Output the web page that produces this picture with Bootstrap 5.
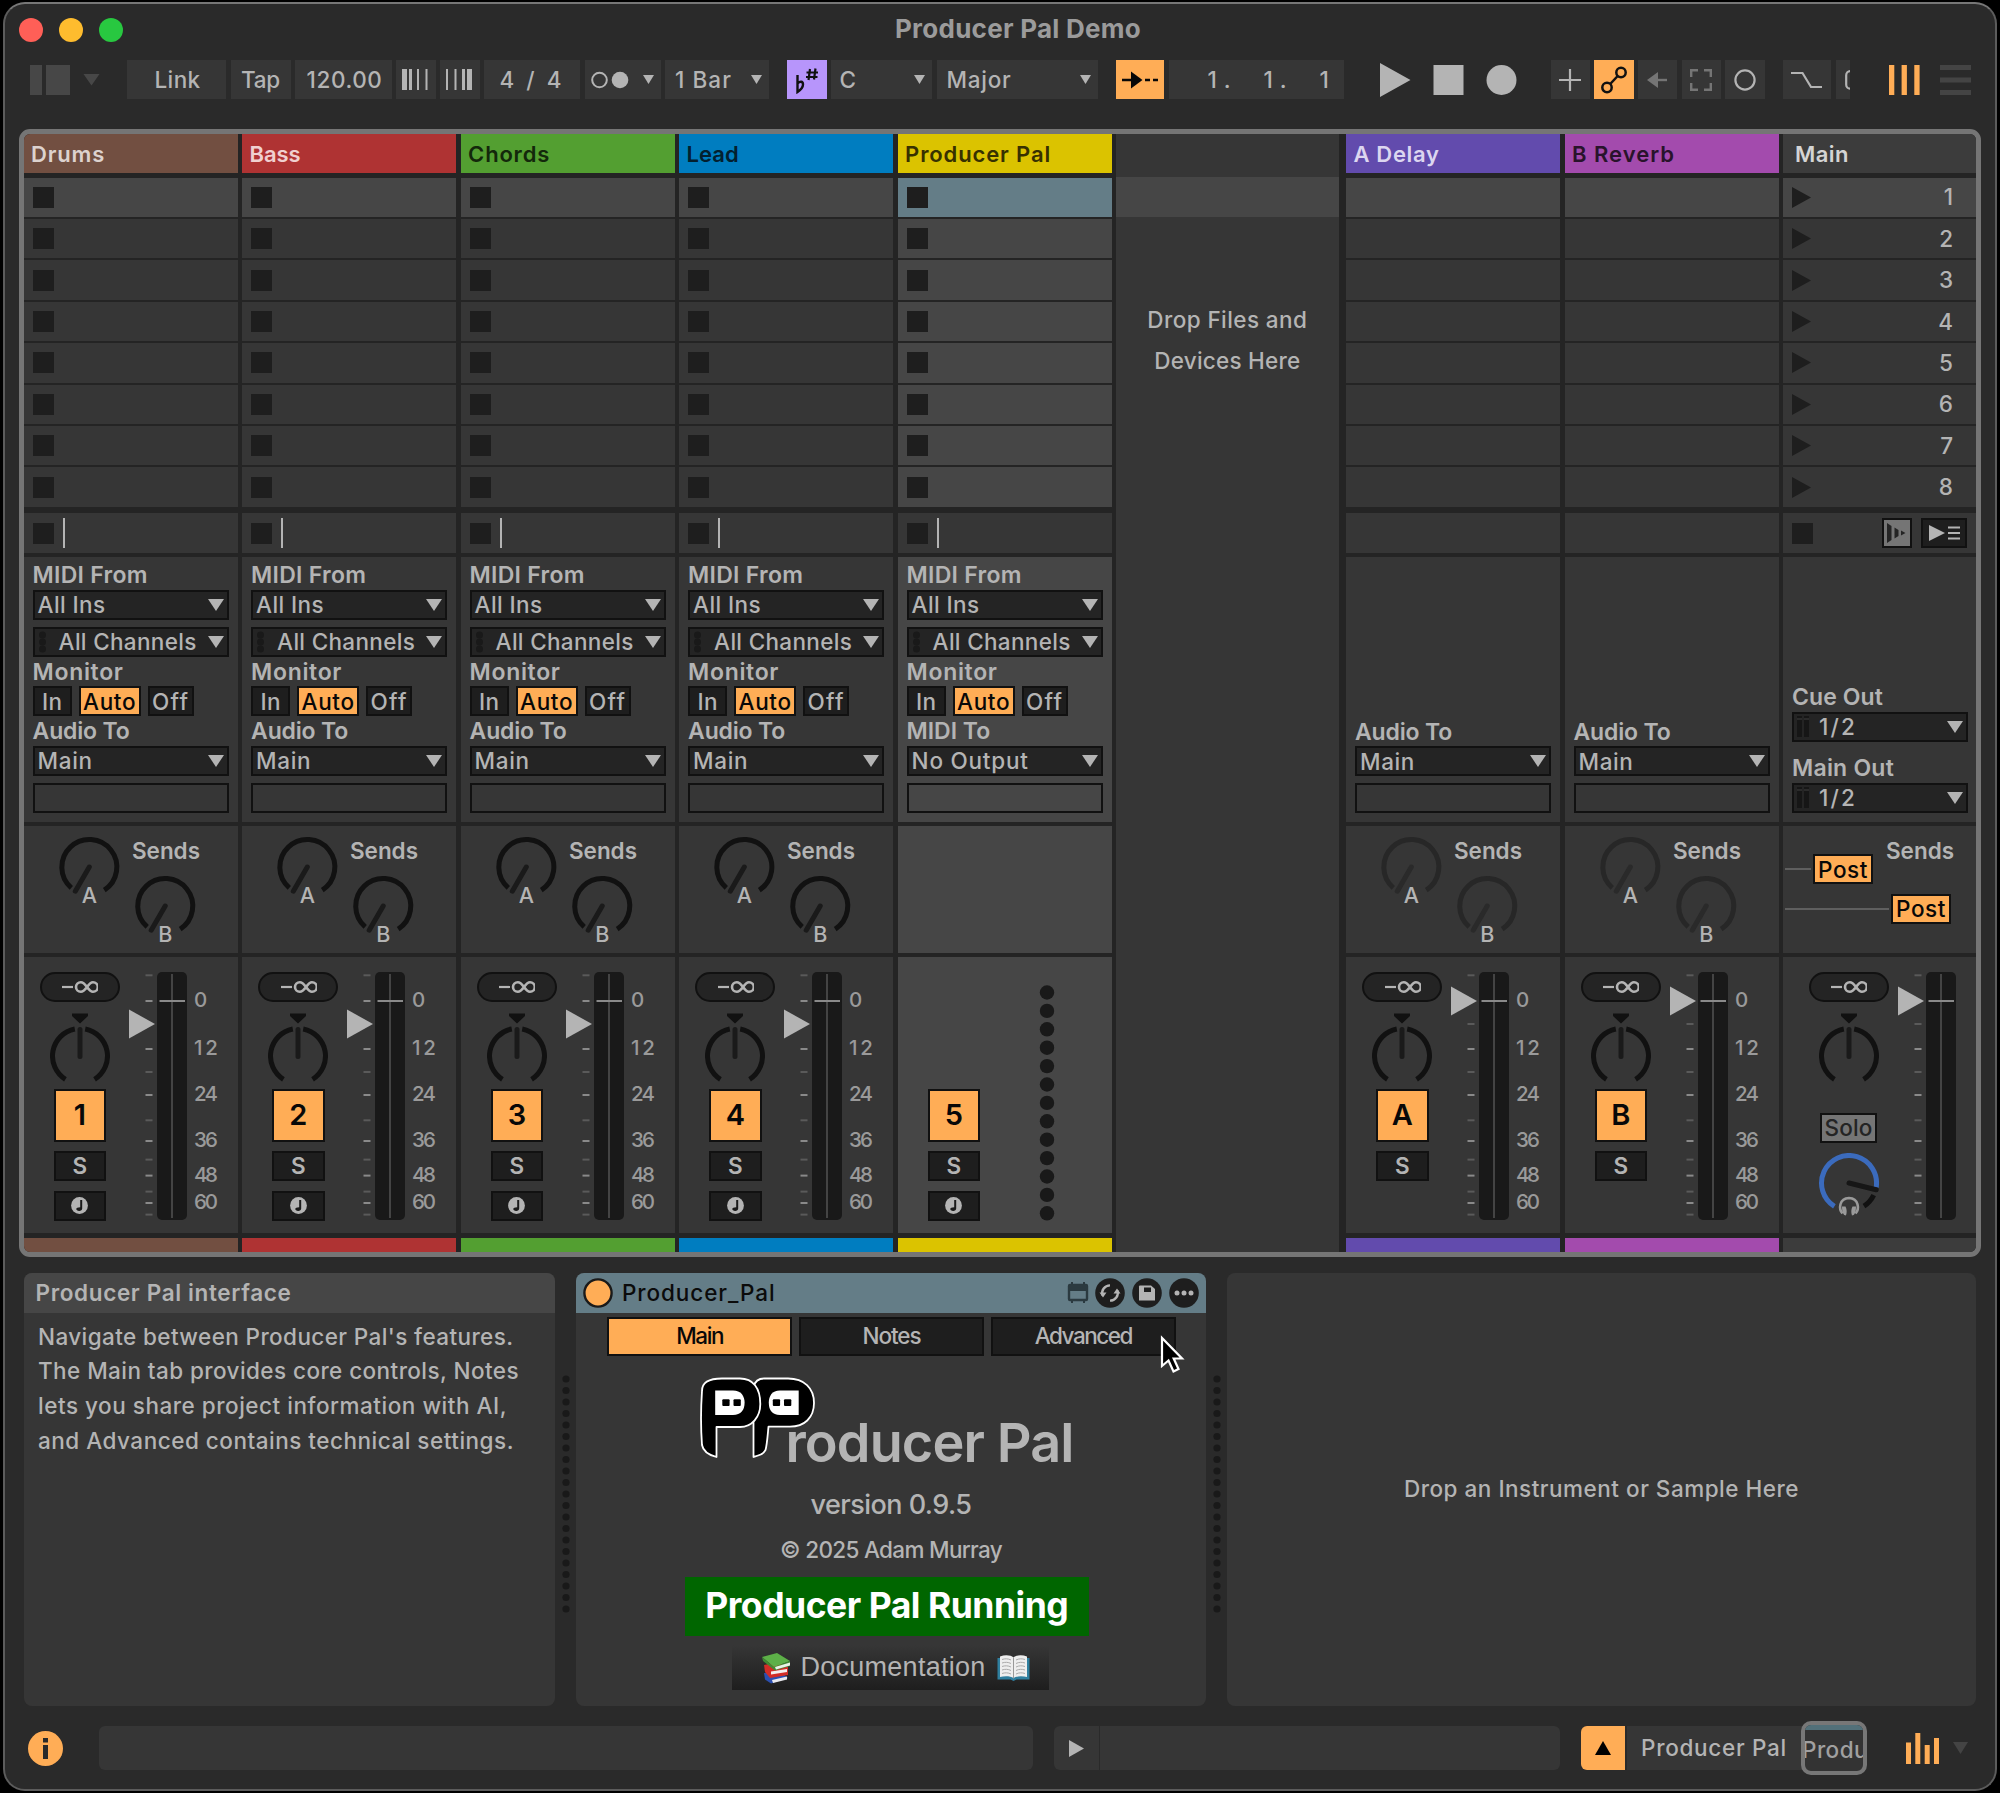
<!DOCTYPE html>
<html lang="en">
<head>
<meta charset="utf-8">
<title>Producer Pal Demo</title>
<link href="https://cdn.jsdelivr.net/npm/bootstrap@5.3.0/dist/css/bootstrap.min.css" rel="stylesheet">
<style>
html,body{background:#000;margin:0;overflow:hidden}
body{font-family:Inter,"Liberation Sans",sans-serif;font-size:22.5px;font-weight:480;color:#b4b4b4;line-height:1;height:1793px}
svg{display:block;flex:none}
svg text{font-family:Inter,"Liberation Sans",sans-serif}
[data-w]{display:inline-block;white-space:pre;flex:none}
.win{margin:2px 0 0 3px;width:1994px;height:1789px;background:#2a2a2a;border:2px solid #5c5c5c;border-top-color:#777;border-radius:22px}
.titlebar{height:56px;padding-bottom:4px}
.titlebar .ttl{font-size:26px;font-weight:700;color:#9b9b9b;margin-left:-98px;position:relative;top:-1px}
.lamp{width:24px;height:24px;border-radius:50%;margin-right:16px}
.tools{height:39px;padding-left:25px}
.tl{height:39px;background:#363636;flex:none;display:flex;align-items:center;justify-content:center;overflow:hidden}
.tl [data-w]{padding-top:1.5px}
.tl.pick{justify-content:space-between}
.tl.hot{background:#ffad56}
.tl.scale-on{background:#b795fb}
.frame{margin:30px 0 0 14px;width:1962px;height:1128px;border:5px solid #757575;border-radius:11px;background:#242424;overflow:hidden}
.trk{width:214px;flex:none;margin-right:4.5px}
.trk:first-child{margin-left:-.4px}
.trk.mainout{width:194px;margin-right:0}
.cellbox{background:#363636;flex:none}
.sel .cellbox{background:#464646}
.hd{height:39px;padding:0 0 0 7.5px;margin-bottom:4.5px;font-weight:600;font-size:22px;display:flex;align-items:center}
.slots{height:329.2px;margin-bottom:6.8px;display:flex;flex-direction:column;gap:2px}
.slot{flex:1 1 0;padding:0 24px 0 9px;display:flex;align-items:center;justify-content:space-between;background:#363636}
.slot span{padding-top:1px}
.sel .slot{background:#464646}
.slot:first-child{background:#464646}
.sel .slot:first-child{background:#647d87}
.sq{width:21px;height:21px;background:#1e1e1e;flex:none}
.stoprow{height:39.5px;margin-bottom:4.5px;padding:0 9px;display:flex;align-items:center}
.sel .stoprow{background:#363636}
.cline{width:2px;height:30px;background:#b4b4b4;margin-left:9px}
.io{height:264.5px;margin-bottom:4.5px;padding:2.7px 9px 9px 9px}
.lb{height:29.8px;line-height:31px;font-weight:600;font-size:23px}
.dd{height:29.8px;background:#242424;border:2px solid #111;padding:0 3px;display:flex;align-items:center;justify-content:space-between}
.dd [data-w],.mb [data-w]{padding-top:1px}
.dd.void{background:transparent;margin-top:7px}
.mb{height:29.8px;background:#1e1e1e;border:2px solid #111;display:flex;align-items:center;justify-content:center}
.mb.hot{background:#ffad56;color:#080808}
.snd{height:127px;margin-bottom:4px}
.mix{height:276px;margin-bottom:4.5px;padding:14.8px 0 0 16.3px;display:flex}
.strip{height:14px}
.pill{width:80px;height:30px;border:2px solid #111;border-radius:15px;background:#242424;display:flex;align-items:center;justify-content:center;font-size:26px}
.num{width:52.5px;height:53px;border:2px solid #111;background:#ffad56;color:#080808;font-weight:600;font-size:29px;display:flex;align-items:center;justify-content:center;margin-bottom:9px;padding-bottom:2px}
.sb{width:52.5px;height:30px;border:2px solid #111;background:#1e1e1e;display:flex;align-items:center;justify-content:center;margin-bottom:9.5px;font-weight:600}
.solo{width:57px;height:30px;border:2px solid #111;background:#757575;color:#242424;display:flex;align-items:center;justify-content:center;margin:23.500px 0 10px}
.drop{width:222.5px;margin-right:7.4px;flex:none;background:linear-gradient(#363636 43px,#464646 43px,#464646 83px,#363636 83px);padding-top:165px;text-align:center;line-height:41.4px}
.lower{margin:16px 0 0 19px;height:432.5px}
.pane{background:#363636;border-radius:8px;overflow:hidden;flex:none}
.phead{height:39.5px;display:flex;align-items:center}
.help{line-height:34.7px;padding:7px 0 0 14px}
.dots{width:21px;flex:none;display:flex;justify-content:center;align-items:center;padding-top:10px}
.tabx{width:184.5px;height:39.3px;border:2px solid #111;background:#1e1e1e;display:flex;align-items:center;justify-content:center}
.tabx [data-w]{padding-top:1px}
.tabx.hot{background:#ffad56;color:#080808}
.run{width:404.5px;height:59.5px;background:#060;color:#fff;font-weight:700;font-size:35.5px;margin:11.7px 8.5px 0 0;padding-bottom:1px}
.docs{width:317px;height:45.5px;margin:8.3px 1px 0 0;background:linear-gradient(#363636,#1e1e1e);font:27px "Liberation Sans",sans-serif}
.foot{height:44px;margin:20.5px 0 0 0;padding-left:23px}
.bar{height:44px;background:#363636;flex:none;display:flex;align-items:center}
.thumb{width:66px;height:54px;border:4.5px solid #777;border-radius:10px;background:#333;overflow:hidden;flex:none;margin-left:-2px}
.thumb i{display:block;height:5px;background:#527079}
.pointer{position:absolute;left:1160px;top:1335px}
</style>
</head>
<body>
<div class="win">
  <div class="titlebar d-flex align-items-center ps-3">
    <div class="lamp" style="background:#ff5f57;margin-left:-2px"></div><div class="lamp" style="background:#febc2e"></div><div class="lamp" style="background:#28c840"></div>
    <div class="flex-fill text-center"><span class="ttl" data-w="246">Producer Pal Demo</span></div>
  </div>
  <div class="tools d-flex align-items-center" id="tools"></div>
  <div class="frame d-flex" id="frame"></div>
  <div class="lower d-flex">
    <section class="pane" style="width:531px">
      <div class="phead" style="background:#464646;padding-left:11.500px;font-weight:600"><span data-w="256">Producer Pal interface</span></div>
      <div class="help">
        <div><span data-w="475.500">Navigate between Producer Pal's features.</span></div>
        <div><span data-w="481">The Main tab provides core controls, Notes</span></div>
        <div><span data-w="469">lets you share project information with AI,</span></div>
        <div><span data-w="476">and Advanced contains technical settings.</span></div>
      </div>
    </section>
    <div class="dots"></div>
    <section class="pane" style="width:630px">
      <div class="phead" style="background:#647d87;padding-left:7px;color:#0b0b0b;font-weight:530">
        <svg width="30" height="30"><circle cx="15" cy="15" r="13.600" fill="#ffad56" stroke="#1a1a1a" stroke-width="2.400"/></svg>
        <span style="width:442px;margin-left:9px"><span data-w="153.500">Producer_Pal</span></span>
        <svg width="22" height="28" viewBox="0 0 22 28" style="margin-left:3px"><path d="M5 3v4M17 3v4M5 21v3M17 21v3" stroke="#2b3a40" stroke-width="2"/><rect x="2" y="6" width="18" height="15" rx="1" fill="none" stroke="#2b3a40" stroke-width="2.400"/><rect x="2" y="6" width="18" height="6" fill="#2b3a40"/></svg>
        <svg width="30" height="30" viewBox="0 0 30 30" style="margin-left:6px"><circle cx="15" cy="15" r="14.800" fill="#1e1e1e"/><path d="M7.500 17.500A7.800 7.800 0 0 1 15 7.400M22.500 12.500A7.800 7.800 0 0 1 15 22.600" fill="none" stroke="#b4b4b4" stroke-width="2.400"/><path d="M4.500 14.500h7l-3.500 5zM18.500 15.500h7l-3.500-5z" fill="#b4b4b4"/></svg>
        <svg width="30" height="30" viewBox="0 0 30 30" style="margin-left:7px"><circle cx="15" cy="15" r="14.800" fill="#1e1e1e"/><path d="M8 7.500h11l4 3.500v11.500h-16v-14a1 1 0 0 1 1-1z" fill="#b4b4b4"/><rect x="12" y="9.500" width="7" height="4.500" fill="#1e1e1e"/></svg>
        <svg width="30" height="30" viewBox="0 0 30 30" style="margin-left:7px"><circle cx="15" cy="15" r="14.800" fill="#1e1e1e"/><g fill="#b4b4b4"><circle cx="8" cy="15" r="2.500"/><circle cx="15" cy="15" r="2.500"/><circle cx="22" cy="15" r="2.500"/></g></svg>
      </div>
      <div class="d-flex flex-column align-items-center">
        <div class="d-flex" style="gap:7.300px;margin:4px 0 0 1px">
          <div class="tabx hot"><span data-w="47">Main</span></div><div class="tabx"><span data-w="58">Notes</span></div><div class="tabx"><span data-w="97">Advanced</span></div>
        </div>
        <div class="d-flex" style="margin:21.500px 9px 0 0;height:92px">
          <svg width="116" height="82" viewBox="0 0 116 82">
            <g fill="#000" stroke="#fff" stroke-width="1.800" stroke-linejoin="round">
              <path d="M53.500 80V10C55 4 58 1.500 64 1.500H88C104 1.500 114 11 114 26C114 41 104 49.700 90 49.700H68.500C67.500 60 67 68 65.500 73C63 77.500 59 78.500 53.500 80Z"/>
              <path d="M16.500 80V50H40C52 50 60.300 40 60.300 27C60.300 11 53 1.500 40 1.500H22C8 1.500 2 6 2 14C.9 30 .8 52 2 68C3 74 9 78 16.500 80Z"/>
            </g>
            <g fill="#fff"><path d="M15.200 13.500H33C41 13.500 44.600 19 44.600 25.800C44.600 33 41 38 33 38H15.200Z"/><path d="M98.700 13.500H80C72 13.500 68.800 19 68.800 25.800C68.800 33 72 38 80 38H98.700Z"/></g>
            <g fill="#000"><rect x="22.300" y="22.200" width="7.300" height="6.800" rx="1"/><rect x="33.500" y="22.200" width="7.300" height="6.800" rx="1"/><rect x="72.800" y="22.200" width="7.300" height="6.800" rx="1"/><rect x="84" y="22.200" width="7.300" height="6.800" rx="1"/></g>
          </svg>
          <span data-w="288" style="font-size:54px;font-weight:600;margin:39px 0 0 -30px;line-height:54px">roducer Pal</span>
        </div>
        <div style="margin-top:21px;line-height:30px;font-size:27px"><span data-w="161">version 0.9.5</span></div>
        <div style="margin-top:15px;line-height:30px"><span data-w="222">© 2025 Adam Murray</span></div>
        <div class="run d-flex align-items-center justify-content-center"><span data-w="363">Producer Pal Running</span></div>
        <div class="docs d-flex align-items-center justify-content-center">
          <svg width="32" height="32" viewBox="0 0 32 32"><path d="M4 21l17-1 7 6-17 5.500-6-4z" fill="#2b4fb0"/><path d="M12 28l15-3.500v3l-14 3.500z" fill="#e8e8ee"/><path d="M4 13l14-3 10 5v8L10 26l-5-6z" fill="#d22c26"/><path d="M11 19.500l16-2.500v3l-16 2.500z" fill="#f3eeee"/><path d="M2 5l15-4 13 8-16 6z" fill="#5db048"/><path d="M2 5l12 10 16-6v5l-15 4.500L3 9z" fill="#3f8b33"/><path d="M15 15l15-4.500v3l-14 4z" fill="#e9f2e6"/></svg>
          <span data-w="185" style="margin:0 11px 0 9px">Documentation</span>
          <svg width="33" height="28" viewBox="0 0 33 28" style="margin-right:-8px"><path d="M.5 4h32v21.500h-13l-3 1.500-3-1.500h-13z" fill="#2f7f9f"/><path d="M3 2.500c5-2 11-1.500 13.500 1v20.500c-3-2-9-2-13.500-1zM30 2.500c-5-2-11-1.500-13.500 1v20.500c3-2 9-2 13.500-1z" fill="#eee"/><path d="M5 5.500c3-1 6-1 9 .5M5 9c3-1 6-1 9 .5M5 12.500c3-1 6-1 9 .5M5 16c3-1 6-1 9 .5M5 19.500c3-1 6-1 9 .5M28 5.500c-3-1-6-1-9 .5M28 9c-3-1-6-1-9 .5M28 12.500c-3-1-6-1-9 .5M28 16c-3-1-6-1-9 .5M28 19.500c-3-1-6-1-9 .5" stroke="#aaa" fill="none"/><path d="M16.500 3.500v21" stroke="#999"/></svg>
        </div>
      </div>
    </section>
    <div class="dots"></div>
    <section class="pane d-flex align-items-center justify-content-center" style="width:749px"><span data-w="395">Drop an Instrument or Sample Here</span></section>
  </div>
  <footer class="foot d-flex align-items-center">
    <svg width="35" height="35" viewBox="0 0 35 35"><circle cx="17.500" cy="17.500" r="17.500" fill="#ffad56"/><path d="M15 7h5v4.500h-5zM15 14h5v14h-5z" fill="#2a2a2a"/></svg>
    <div class="bar" style="width:934px;margin-left:36px;border-radius:6px"></div>
    <div class="bar justify-content-center" style="width:44.500px;margin-left:21px;border-radius:6px 0 0 6px"><svg width="15" height="17"><path d="M0 0L15 8.500 0 17z" fill="#b4b4b4"/></svg></div>
    <div class="bar" style="width:460px;margin-left:1.500px;border-radius:0 6px 6px 0"></div>
    <div class="bar justify-content-center" style="width:44px;margin-left:21px;border-radius:6px 0 0 6px;background:#ffad56"><svg width="16" height="14"><path d="M8 0L16 14H0z" fill="#000"/></svg></div>
    <div class="bar" style="width:176px;margin-left:2px;padding-left:14px;font-weight:530"><span data-w="146">Producer Pal</span></div>
    <div class="thumb"><i></i><div style="padding-top:9px;margin-left:-3px;color:#a0a0a0"><span data-w="66">Produ</span></div></div>
    <svg width="34" height="31" viewBox="0 0 34 31" style="margin-left:39px" fill="#ffad56"><path d="M0 9.500h5V31H0zM9.300 0h5v31h-5zM18.700 12h5v19h-5zM28 5h5v26h-5z"/></svg>
    <svg width="15" height="12" style="margin-left:13px"><path d="M0 0H15L7.500 12z" fill="#444"/></svg>
  </footer>
</div>
<svg class="pointer" width="30" height="42" viewBox="0 0 30 42"><path d="M2 3V31L8.500 25.500 13.500 36.500 18.500 34 13.700 23.500H22z" fill="#000" stroke="#fff" stroke-width="2.200"/></svg>

<script src="https://cdn.jsdelivr.net/npm/bootstrap@5.3.0/dist/js/bootstrap.bundle.min.js"></script>
<script>
const G = '#b4b4b4';
const t = (w, s) => `<span data-w="${w}">${s}</span>`;
const caret = (w = 11, h = 9, c = G) => `<svg width="${w}" height="${h}"><path d="M0 0H${w}L${w / 2} ${h}z" fill="${c}"/></svg>`;
// Toolbar entry: left margin, width, content, modifier class, padding
const tool = (ml, w, html, cls = '', pad = '') => `<div class="tl ${cls}" style="margin-left:${ml}px;width:${w}px;${pad ? 'padding:0 ' + pad : ''}">${html}</div>`;
const bars = a => `<svg width="27" height="21">${a.map(([x, w]) => `<rect x="${x}" width="${w}" height="21" fill="${G}"/>`).join('')}</svg>`;
document.getElementById('tools').innerHTML =
  `<svg width="70" height="30" viewBox="0 0 70 30"><path d="M0 0h12v30H0zM16 0h24v30H16zM53.500 9h16l-8 11.500z" fill="#474747"/></svg>` +
  tool(27, 99, t(46, 'Link'), '', '0 0 2px') + tool(4.5, 60, t(39, 'Tap')) + tool(4.5, 97, t(76, '120.00'), '', '0 0 2px') +
  tool(4, 39.5, bars([[0, 5], [7, 3], [15, 2], [23.5, 2]])) + tool(4.5, 39.5, bars([[0, 2], [8.5, 2], [16, 3], [21, 5]])) +
  tool(4.5, 96, t(65, '4 / 4')) +
  tool(5, 76, `<svg width="38" height="18"><circle cx="8.500" cy="9" r="7.300" fill="none" stroke="${G}" stroke-width="2"/><circle cx="29" cy="9" r="8.300" fill="${G}"/></svg>` + caret(), 'pick', '7px 0 6px') +
  tool(4, 104, t(57, '1 Bar') + caret(), 'pick', '7px 0 10px') +
  tool(18, 39.5, `<svg width="24" height="28" viewBox="0 0 24 28" fill="none" stroke="#111" stroke-width="2.400"><path d="M2.500 9v17c3-2 5.500-4.500 5.500-7.500 0-3.500-3-3.500-5.500-1"/><path d="M15 3l-1.500 11M20.500 2.500l-1.500 11M11.500 6.500h11.500M11 11h11.500" stroke-width="2.200"/></svg>`, 'scale-on') +
  tool(4, 101, t(16, 'C') + caret(), 'pick', '7px 0 9px') + tool(5, 161, t(65, 'Major') + caret(), 'pick', '7px 0 10px') +
  tool(18, 48.5, `<svg width="36" height="22" viewBox="0 0 36 22"><path d="M0 11h10M23 11h5M31 11h5" stroke="#080808" stroke-width="2.600"/><path d="M9 2.500L20.500 11 9 19.500z" fill="#080808"/></svg>`, 'hot') +
  tool(4.5, 175, t(30, '1.') + t(30, '1.') + t(13, '1'), 'pick', '11px 0 39px') +
  `<svg width="137" height="34" viewBox="0 0 137 34" style="margin-left:36px" fill="${G}"><path d="M0 0L30.500 17 0 34zM53.500 2h30v30h-30z"/><circle cx="121.500" cy="17" r="15"/></svg>` +
  tool(34, 39, `<svg width="22" height="22"><path d="M11 0v22M0 11h22" stroke="${G}" stroke-width="2.200"/></svg>`) +
  tool(4.5, 39.5, `<svg width="26" height="32" viewBox="0 0 26 32" fill="none" stroke="#111" stroke-width="2.500"><circle cx="6" cy="23.500" r="4.700"/><circle cx="20" cy="8.500" r="4.700"/><path d="M9.200 20L16.700 12"/></svg>`, 'hot') +
  tool(4, 39.5, `<svg width="20" height="18"><path d="M0 9L11 1v16z" fill="#757575"/><path d="M10 9h10" stroke="#757575" stroke-width="2.400"/></svg>`) +
  tool(4.5, 39.5, `<svg width="22" height="22" fill="none" stroke="#757575" stroke-width="2.400"><path d="M1.200 8V1.200H8M14 1.200h6.800V8M20.800 14v6.800H14M8 20.800H1.200V14"/></svg>`) +
  tool(4, 39.5, `<svg width="22" height="22"><circle cx="11" cy="11" r="9.600" fill="none" stroke="${G}" stroke-width="2.200"/></svg>`) +
  tool(18, 48.5, `<svg width="31" height="18"><path d="M0 2h11.500L20 16h11" fill="none" stroke="${G}" stroke-width="2.200"/></svg>`) +
  `<div class="tl justify-content-start" style="margin-left:5px;width:14px;padding-left:9px"><svg width="20" height="20"><rect x="1.200" y="1.200" width="17" height="17.500" rx="4" fill="none" stroke="${G}" stroke-width="2.200"/></svg></div>` +
  `<svg width="83" height="30" style="margin-left:38.500px"><path d="M0 0h5.300v30H0zM12.600 0h5.300v30h-5.300zM25.300 0h5.300v30h-5.300z" fill="#ffad56"/><path d="M51 0h31v5H51zM51 12.500h31v5H51zM51 25h31v5H51z" fill="#444"/></svg>`;

const deg = Math.PI / 180;
const pt = (cx, cy, r, a) => `${(cx + r * Math.sin(a * deg)).toFixed(1)} ${(cy - r * Math.cos(a * deg)).toFixed(1)}`;
// Arc between two clock angles, 0 at the top
const arc = (cx, cy, a, b, c, r = 27.5) => `<path d="M${pt(cx, cy, r, a)}A${r} ${r} 0 ${b - a > 180 ? 1 : 0} 1 ${pt(cx, cy, r, b)}" fill="none" stroke="${c}" stroke-width="5"/>`;
const needle = (cx, cy, a, c) => `<path d="M${cx} ${cy}L${pt(cx, cy, 28, a)}" stroke="${c}" stroke-width="5" stroke-linecap="round"/>`;
const sendKnob = (cx, cy, s, dim) => arc(cx, cy, -139, 147, dim ? '#272727' : '#111') + needle(cx, cy, -150, dim ? '#2a2a2a' : '#1a1a1a') +
  `<text x="${cx}" y="${cy + 35.7}" text-anchor="middle" font-size="21.500" font-weight="500" fill="${G}">${s}</text>`;
const sends = dim => `<svg width="214" height="127">${sendKnob(65.3, 41, 'A', dim)}${sendKnob(141.2, 80, 'B', dim)}<text x="108" y="33" textLength="68" font-size="22.500" font-weight="600" fill="${G}">Sends</text></svg>`;

const fader = (pos, labels) => {
  const ys = [[3.3, 0], [29, 1], [52, 0], [77, 1], [100, 0], [123, 1], [148.3, 0], [169, 1], [187.6, 0], [203.6, 1], [219.6, 0], [231, 1], [242.6, 0]];
  const lab = [['0', 27.7], ['12', 75.7], ['24', 121.7], ['36', 167.7], ['48', 202.2], ['60', 229.7]];
  return `<svg width="${labels ? 92 : 60}" height="250" style="margin-left:9px">` +
    ys.map(([y, b]) => `<path d="M16.500 ${y}h7" stroke="${b ? '#8a8a8a' : '#5a5a5a'}" stroke-width="2"/>`).join('') +
    `<path d="M0 ${pos - 14.5}L26 ${pos} 0 ${pos + 14.5}z" fill="${G}"/><rect x="28" width="30" height="248" rx="5" fill="#191919"/>` +
    `<path d="M43 2v244" stroke="#444" stroke-width="2"/><path d="M30.500 29h25.500" stroke="#8a8a8a" stroke-width="2"/>` +
    (labels ? lab.map(([s, y]) => `<text x="65" y="${y + 7.5}" ${s.length > 1 ? 'textLength="24"' : ''} font-size="20.500" fill="#9a9a9a">${s}</text>`).join('') : '') + `</svg>`;
};
const pan = `<svg width="60" height="76" style="margin:11px 0 0"><path d="M22 .5h16v2.500l-8 7.500-8-7.500z" fill="#111"/>${arc(30, 43, -148, -11, '#111')}${arc(30, 43, 11, 148, '#111')}<path d="M30 16.500v27" stroke="#1a1a1a" stroke-width="5" stroke-linecap="round"/></svg>`;
const note = `<svg width="17" height="17" viewBox="0 0 17 17"><circle cx="8.500" cy="8.500" r="8.400" fill="${G}"/><path d="M9.200 3h2v8.500c0 1.600-1.300 2.500-3 2.500-1.800 0-2.900-.8-2.900-1.900s1.400-1.800 3.900-1.800z" fill="#1a1a1a"/></svg>`;
const pill = `<div class="pill"><svg width="37" height="18"><path d="M1 9h11" stroke="${G}" stroke-width="2.200"/><path d="M26 9C23.500 5.500 21.800 4.200 19.800 4.200a4.800 4.800 0 0 0 0 9.600C21.800 13.800 23.500 12.500 26 9C28.500 5.500 30.200 4.200 32 4.200a4.800 4.800 0 0 1 0 9.600C30.200 13.800 28.500 12.500 26 9z" fill="none" stroke="${G}" stroke-width="2.600"/></svg></div>`;
const dd = (w, s, pre = '') => `<div class="dd"><span class="d-flex align-items-center">${pre}${t(w, s)}</span>${caret(16, 12)}</div>`;
const midiDots = `<svg width="10" height="22" style="margin:0 11px 0 0"><g fill="#191919"><circle cx="4.500" cy="4" r="3.500"/><circle cx="4.500" cy="11" r="3.500"/><circle cx="4.500" cy="18" r="3.500"/></g></svg>`;
const head = (c, fg, w, s) => `<div class="hd" style="background:${c};color:${fg}">${t(w, s)}</div>`;
const stop = '<div class="sq"></div>';

const track = ([name, w, c, fg, n], i) => {
  const pal = i === 4;
  const out = pal ? `<div class="lb">${t(83.5, 'MIDI To')}</div>${dd(117, 'No Output')}` : `<div class="lb">${t(97, 'Audio To')}</div>${dd(55, 'Main')}`;
  const dots = `<svg width="20" height="250" style="margin-left:43px">${Array.from({length: 13}, (_, k) => `<circle cx="10" cy="${20.5 + k * 18.4}" r="7.200" fill="#191919"/>`).join('')}</svg>`;
  return `<div class="trk ${pal ? 'sel' : ''}">${head(c, fg, w, name)}
  <div class="slots">${`<div class="slot">${stop}</div>`.repeat(8)}</div>
  <div class="cellbox stoprow">${stop}<div class="cline"></div></div>
  <div class="cellbox io"><div class="lb">${t(115, 'MIDI From')}</div>${dd(68, 'All Ins')}<div style="height:7px"></div>${dd(138, 'All Channels', midiDots)}
    <div class="lb">${t(91, 'Monitor')}</div>
    <div class="d-flex" style="gap:7px"><div class="mb" style="width:39px">${t(20, 'In')}</div><div class="mb hot" style="width:62px">${t(53, 'Auto')}</div><div class="mb" style="width:46px">${t(37, 'Off')}</div></div>
    ${out}<div class="dd void"></div></div>
  <div class="cellbox snd">${pal ? '' : sends(false)}</div>
  <div class="cellbox mix"><div class="d-flex flex-column align-items-center" style="width:80px">${pal ? '<div style="height:117px"></div>' : pill + pan}<div class="num">${n}</div><div class="sb">S</div><div class="sb">${note}</div></div>${pal ? dots : fader(52, true)}</div>
  <div class="strip" style="background:${c}"></div></div>`;
};
const ret = ([name, w, c, fg, n]) => `<div class="trk">${head(c, fg, w, name)}
  <div class="slots">${'<div class="slot"></div>'.repeat(8)}</div><div class="cellbox stoprow"></div>
  <div class="cellbox io d-flex flex-column justify-content-end"><div class="lb">${t(97, 'Audio To')}</div>${dd(55, 'Main')}<div class="dd void"></div></div>
  <div class="cellbox snd">${sends(true)}</div>
  <div class="cellbox mix"><div class="d-flex flex-column align-items-center" style="width:80px">${pill}${pan}<div class="num">${n}</div><div class="sb">S</div></div>${fader(29, true)}</div>
  <div class="strip" style="background:${c}"></div></div>`;
const meter = `<svg width="14" height="22" style="margin:0 8px 0 0"><path d="M0 0h5v21H0zM7 0h5v21H7z" fill="#161616"/><path d="M0 3h5M7 3h5" stroke="#333" stroke-width="1.500"/></svg>`;
const cue = `<svg width="62" height="68">${arc(31, 30, -148, 99, '#3b6bbd')}${arc(31, 30, 116, 147, '#111')}${needle(31, 30, 104, '#161616')}
  <path d="M24.500 60.500C20.500 56 21 45.500 31 45C41 45.500 41.500 56 37.500 60.500" fill="none" stroke="#9a9a9a" stroke-width="2.600"/><path d="M24 53.500h3.500c1.500 3 1.500 6 .5 9-2.500 0-4-3-4-9zM38 53.500h-3.500c-1.500 3-1.500 6-.5 9 2.500 0 4-3 4-9z" fill="#9a9a9a"/></svg>`;
const mainTrack = `<div class="trk mainout"><div class="hd" style="background:#3c3c3c;color:#d4d4d4;padding-left:12px">${t(54, 'Main')}</div>
  <div class="slots">${[1,2,3,4,5,6,7,8].map(n => `<div class="slot"><svg width="19" height="21"><path d="M0 0L19 10.500 0 21z" fill="#1e1e1e"/></svg><span>${n}</span></div>`).join('')}</div>
  <div class="cellbox stoprow">${stop}<div class="mb" style="width:30px;margin-left:auto;background:#757575"><svg width="20" height="22"><path d="M0 1l4.500 3v14L0 21zM7.500 5.500l4 2.500v6l-4 2.500zM14 8.500l4.500 2.500-4.500 2.500z" fill="#242424"/></svg></div>
    <div class="mb" style="width:46px;margin:0 1px 0 9px"><svg width="31" height="16"><path d="M0 0L16 8 0 16z" fill="${G}"/><path d="M19 2.500h12M19 8h12M19 13.500h12" stroke="${G}" stroke-width="2.200"/></svg></div></div>
  <div class="cellbox io d-flex flex-column justify-content-end"><div class="lb">${t(91, 'Cue Out')}</div>${dd(38, '1/2', meter)}<div class="lb" style="margin-top:11.500px">${t(102, 'Main Out')}</div>${dd(38, '1/2', meter)}</div>
  <div class="cellbox snd d-flex flex-column" style="padding-left:2px">
    <div class="d-flex align-items-start" style="padding-top:14px"><div style="width:26px;height:2px;background:#5f5f5f;margin:27.500px 2px 0 0"></div><div class="mb hot" style="width:60px;margin-top:14px">${t(50, 'Post')}</div><span style="font-weight:600;margin-left:13px">${t(68, 'Sends')}</span></div>
    <div class="d-flex align-items-center" style="margin-top:9.500px"><div style="width:104px;height:2px;background:#5f5f5f;margin-right:2px"></div><div class="mb hot" style="width:60px">${t(50, 'Post')}</div></div>
  </div>
  <div class="cellbox mix" style="padding-left:25.500px"><div class="d-flex flex-column align-items-center" style="width:80px">${pill}${pan}<div class="solo">${t(48, 'Solo')}</div>${cue}</div>${fader(29, false)}</div>
  <div class="strip" style="background:#3c3c3c"></div></div>`;

document.getElementById('frame').innerHTML = [
  ['Drums', 74, '#724f41', '#ddd2ce', 1], ['Bass', 51, '#af3333', '#f0d0d0', 2], ['Chords', 82, '#539f31', '#13280b', 3],
  ['Lead', 52, '#007dc0', '#03202f', 4], ['Producer Pal', 146, '#dbc300', '#373100', 5]].map(track).join('') +
  `<div class="drop"><div>${t(160, 'Drop Files and')}</div><div>${t(146, 'Devices Here')}</div></div>` +
  [['A Delay', 86, '#624bad', '#dcd6f0', 'A'], ['B Reverb', 103, '#a34bad', '#29132b', 'B']].map(ret).join('') + mainTrack;

document.querySelectorAll('.dots').forEach(d => d.innerHTML = `<svg width="8" height="240">${Array.from({length: 21}, (_, k) => `<circle cx="4" cy="${5 + k * 11.5}" r="3.600" fill="#191919"/>`).join('')}</svg>`);

document.querySelectorAll('[data-w]').forEach(e => {
  const want = +e.dataset.w, n = e.textContent.length;
  e.style.letterSpacing = ((want - e.getBoundingClientRect().width) / n).toFixed(3) + 'px';
});
</script>
</body>
</html>
